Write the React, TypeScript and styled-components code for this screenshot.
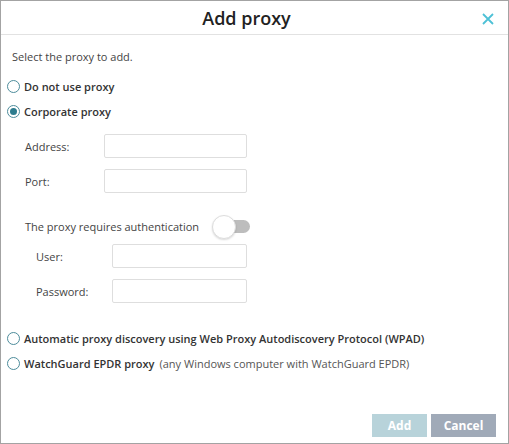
import styled, { createGlobalStyle } from "styled-components";

const GlobalStyle = createGlobalStyle`
  html, body {
    margin: 0;
    padding: 0;
    background: #ffffff;
  }
  body {
    font-family: "Open Sans", "Noto Sans", sans-serif;
    color: #333333;
  }
  * {
    box-sizing: border-box;
  }
`;

const Dialog = styled.div`
  width: 509px;
  height: 444px;
  border: 1px solid #a3a3a3;
  display: flex;
  flex-direction: column;
  background: #ffffff;
`;

const Header = styled.div`
  position: relative;
  height: 34px;
  padding-right: 16px;
  border-bottom: 1px solid #e2e2e2;
  display: flex;
  align-items: center;
  justify-content: center;
`;

const Title = styled.h2`
  margin: 0;
  font-size: 18px;
  font-weight: 600;
  color: #222222;
`;

const CloseBtn = styled.button`
  position: absolute;
  right: 13px;
  top: 10px;
  width: 14px;
  height: 14px;
  padding: 0;
  border: 0;
  background: none;
  cursor: pointer;
  display: flex;
`;

const Body = styled.div`
  flex: 1;
  padding: 14px 0 0 11px;
  font-size: 11px;
`;

const Intro = styled.p`
  margin: 0 0 10px;
  color: #444444;
`;

const OptionRow = styled.label`
  display: flex;
  align-items: center;
  gap: 4px;
  margin-left: -5px;
  height: 25px;
  font-weight: 600;
  color: #333333;
  cursor: pointer;
`;

const Radio = styled.span<{ checked?: boolean }>`
  width: 13px;
  height: 13px;
  border-radius: 50%;
  border: 1px solid #4d8c9b;
  display: flex;
  align-items: center;
  justify-content: center;
  flex-shrink: 0;
  &::after {
    content: "";
    width: 7px;
    height: 7px;
    border-radius: 50%;
    background: #2d7c8e;
    display: ${(p) => (p.checked ? "block" : "none")};
  }
`;

const Light = styled.span`
  font-weight: 400;
  color: #555555;
  margin-left: 1px;
`;

const FieldGrid = styled.div<{ indent: number; labelWidth: number }>`
  display: grid;
  grid-template-columns: ${(p) => p.labelWidth}px auto;
  justify-content: start;
  row-gap: 11px;
  align-items: center;
  padding-left: ${(p) => p.indent}px;
`;

const Label = styled.span`
  color: #444444;
`;

const Input = styled.input<{ w: number }>`
  width: ${(p) => p.w}px;
  height: 24px;
  border: 1px solid #dedede;
  border-radius: 2px;
  font: inherit;
  padding: 0 6px;
`;

const AuthRow = styled.div`
  display: flex;
  align-items: center;
  gap: 13px;
  padding-left: 13px;
  margin: 26px 0 10px;
  color: #444444;
`;

const Toggle = styled.span`
  position: relative;
  width: 36px;
  height: 13px;
  margin-left: 2px;
  border-radius: 7px;
  background: #bdbdbd;
  &::before {
    content: "";
    position: absolute;
    left: -2px;
    top: -5px;
    width: 22px;
    height: 22px;
    border-radius: 50%;
    background: #ffffff;
    border: 1px solid #dddddd;
    box-shadow: 0 1px 2px rgba(0, 0, 0, 0.15);
  }
`;

const Options = styled.div`
  margin-top: 23px;
`;

const Footer = styled.div`
  display: flex;
  justify-content: flex-end;
  gap: 4px;
  padding: 0 12px 6px 0;
`;

const Button = styled.button<{ tone: string; w: number }>`
  width: ${(p) => p.w}px;
  height: 23px;
  border: 0;
  padding: 0;
  font: inherit;
  font-size: 12px;
  font-weight: 700;
  color: #ffffff;
  background: ${(p) => p.tone};
  cursor: pointer;
`;

function App() {
  return (
    <>
      <GlobalStyle />
      <Dialog>
        <Header>
          <Title>Add proxy</Title>
          <CloseBtn aria-label="Close">
            <svg width="14" height="14" viewBox="0 0 14 14">
              <path d="M2 3 L12 13 M12 3 L2 13" stroke="#4ec1d6" strokeWidth="1.8" />
            </svg>
          </CloseBtn>
        </Header>
        <Body>
          <Intro>Select the proxy to add.</Intro>
          <OptionRow>
            <Radio />
            Do not use proxy
          </OptionRow>
          <OptionRow>
            <Radio checked />
            Corporate proxy
          </OptionRow>
          <FieldGrid indent={13} labelWidth={79} style={{ marginTop: 10 }}>
            <Label>Address:</Label>
            <Input w={143} />
            <Label>Port:</Label>
            <Input w={143} />
          </FieldGrid>
          <AuthRow>
            The proxy requires authentication
            <Toggle />
          </AuthRow>
          <FieldGrid indent={24} labelWidth={76}>
            <Label>User:</Label>
            <Input w={135} />
            <Label>Password:</Label>
            <Input w={135} type="password" />
          </FieldGrid>
          <Options>
            <OptionRow>
              <Radio />
              Automatic proxy discovery using Web Proxy Autodiscovery Protocol (WPAD)
            </OptionRow>
            <OptionRow>
              <Radio />
              WatchGuard EPDR proxy
              <Light>(any Windows computer with WatchGuard EPDR)</Light>
            </OptionRow>
          </Options>
        </Body>
        <Footer>
          <Button tone="#b8d3da" w={55}>Add</Button>
          <Button tone="#a0aab8" w={65}>Cancel</Button>
        </Footer>
      </Dialog>
    </>
  );
}

export default App;
